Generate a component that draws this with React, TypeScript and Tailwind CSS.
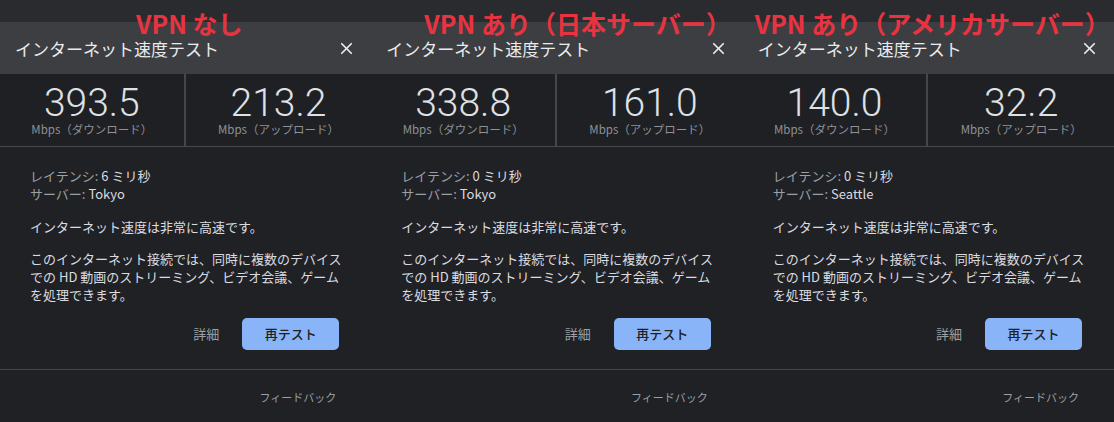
import { X } from "lucide-react";

const PANELS = [
  {
    label: "VPN なし",
    labelPos: "left-[136px]",
    down: "393.5",
    up: "213.2",
    latency: "6 ミリ秒",
    server: "Tokyo",
  },
  {
    label: "VPN あり（日本サーバー）",
    labelPos: "left-[53px]",
    down: "338.8",
    up: "161.0",
    latency: "0 ミリ秒",
    server: "Tokyo",
  },
  {
    label: "VPN あり（アメリカサーバー）",
    labelPos: "left-[12px]",
    down: "140.0",
    up: "32.2",
    latency: "0 ミリ秒",
    server: "Seattle",
  },
];

type Panel = (typeof PANELS)[number];

function SpeedPanel({ p }: { p: Panel }) {
  return (
    <div className="relative flex flex-col h-[422px] bg-[#202124] overflow-hidden">
      {/* strip of the page behind the dialog */}
      <div className="h-[22px] bg-[#2a2b2e]" />

      {/* header */}
      <div className="h-[52px] bg-[#3c3e41] flex items-center justify-between pl-[15px] pr-[15px]">
        <span className="text-[17px] text-[#e8eaed] leading-none">インターネット速度テスト</span>
        <X className="w-[19px] h-[19px] text-[#e8eaed]" strokeWidth={2.2} />
      </div>

      {/* stats */}
      <div className="h-[73px] grid grid-cols-2 bg-[#1f2023] border-b border-[#48494c]">
        <div className="flex flex-col items-center justify-center border-r-2 border-[#45464a]">
          <span className="font-['Roboto'] font-light text-[39px] leading-[38px] text-[#dfe1e5]">{p.down}</span>
          <span className="text-[11.5px] leading-[14px] text-[#8e9196]">Mbps（ダウンロード）</span>
        </div>
        <div className="flex flex-col items-center justify-center">
          <span className="font-['Roboto'] font-light text-[39px] leading-[38px] text-[#dfe1e5]">{p.up}</span>
          <span className="text-[11.5px] leading-[14px] text-[#8e9196]">Mbps（アップロード）</span>
        </div>
      </div>

      {/* body */}
      <div className="px-[30px] pt-[20px] text-[13px] leading-[18px] text-[#dadce0]">
        <div>
          <span className="text-[#9aa0a6]">レイテンシ: </span>
          {p.latency}
        </div>
        <div>
          <span className="text-[#9aa0a6]">サーバー: </span>
          {p.server}
        </div>
        <p className="mt-[15px]">インターネット速度は非常に高速です。</p>
        <p className="mt-[14px] whitespace-nowrap">
          このインターネット接続では、同時に複数のデバイス
          <br />
          での HD 動画のストリーミング、ビデオ会議、ゲーム
          <br />
          を処理できます。
        </p>
      </div>

      <div className="flex items-center justify-end gap-[23px] pr-[32px] mt-[14px]">
        <span className="text-[13px] text-[#9aa0a6]">詳細</span>
        <button className="w-[97px] h-[32px] rounded-[5px] bg-[#8ab4f8] text-[13px] text-[#202124] font-medium">
          再テスト
        </button>
      </div>

      <div className="mt-[19px] border-t border-[#45464a]" />
      <div className="flex justify-end pr-[35px] pt-[19px]">
        <span className="text-[11px] text-[#9aa0a6]">フィードバック</span>
      </div>

      {/* annotation */}
      <span
        className={`absolute top-[8px] ${p.labelPos} text-[25px] leading-[30px] font-bold text-[#ea3340] whitespace-nowrap`}
      >
        {p.label}
      </span>
    </div>
  );
}

export default function App() {
  return (
    <div className="w-[1114px] h-[422px] grid grid-cols-3 bg-[#202124] font-['Noto_Sans_CJK_JP','Noto_Sans',sans-serif]">
      {PANELS.map((p) => (
        <SpeedPanel key={p.label} p={p} />
      ))}
    </div>
  );
}
